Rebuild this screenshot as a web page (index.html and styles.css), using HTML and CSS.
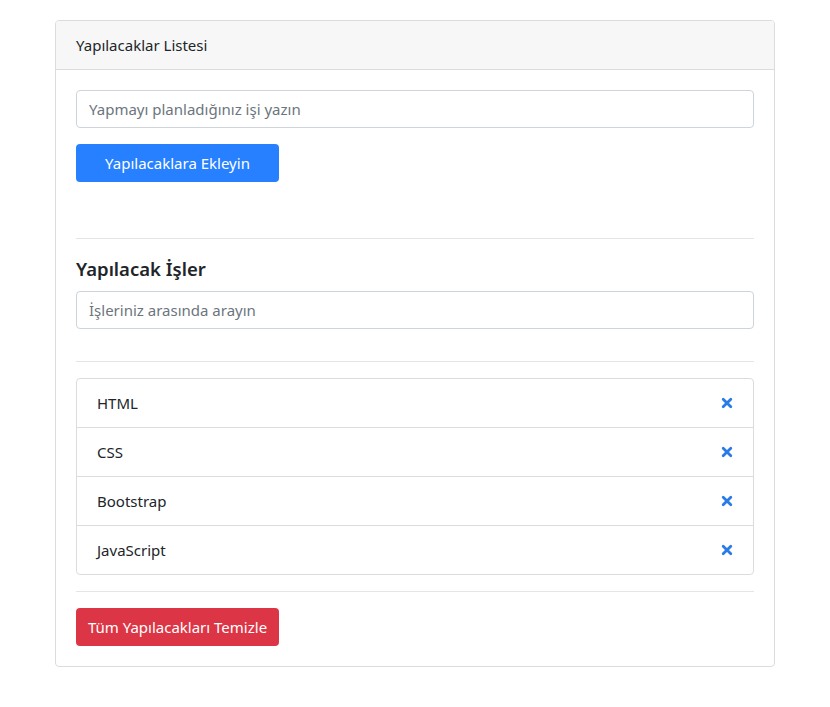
FILE: index.html
```html
<!DOCTYPE html>
<html lang="tr">
<head>
<meta charset="utf-8">
<title>Yapılacaklar Listesi</title>
<link rel="stylesheet" href="styles.css">
</head>
<body>
<div class="container">
  <div class="card">
    <div class="card-header">Yapılacaklar Listesi</div>
    <div class="card-body">
      <form class="add-form">
        <input class="form-control" type="text" placeholder="Yapmayı planladığınız işi yazın">
        <button type="button" class="btn btn-primary">Yapılacaklara Ekleyin</button>
      </form>
      <hr class="sep sep-first">
      <h5 class="title">Yapılacak İşler</h5>
      <input class="form-control" type="text" placeholder="İşleriniz arasında arayın">
      <hr class="sep sep-mid">
      <ul class="list">
        <li class="list-item"><span>HTML</span><a class="del" href="#"><svg width="12" height="12" viewBox="0 0 12 12"><path d="M2.2 2.2L9.8 9.8M9.8 2.2L2.2 9.8" stroke="currentColor" stroke-width="2.8" stroke-linecap="round"/></svg></a></li>
        <li class="list-item"><span>CSS</span><a class="del" href="#"><svg width="12" height="12" viewBox="0 0 12 12"><path d="M2.2 2.2L9.8 9.8M9.8 2.2L2.2 9.8" stroke="currentColor" stroke-width="2.8" stroke-linecap="round"/></svg></a></li>
        <li class="list-item"><span>Bootstrap</span><a class="del" href="#"><svg width="12" height="12" viewBox="0 0 12 12"><path d="M2.2 2.2L9.8 9.8M9.8 2.2L2.2 9.8" stroke="currentColor" stroke-width="2.8" stroke-linecap="round"/></svg></a></li>
        <li class="list-item"><span>JavaScript</span><a class="del" href="#"><svg width="12" height="12" viewBox="0 0 12 12"><path d="M2.2 2.2L9.8 9.8M9.8 2.2L2.2 9.8" stroke="currentColor" stroke-width="2.8" stroke-linecap="round"/></svg></a></li>
      </ul>
      <hr class="sep sep-last">
      <button type="button" class="btn btn-danger">Tüm Yapılacakları Temizle</button>
    </div>
  </div>
</div>
</body>
</html>
```
FILE: styles.css
```css
* { box-sizing: border-box; }
html, body { margin: 0; padding: 0; }
body {
  background: #fff;
  color: #212529;
  font-family: "Noto Sans", "Open Sans", sans-serif;
  font-size: 15px;
  line-height: 24px;
}
.container {
  width: 720px;
  margin: 20px auto 0;
}
.card {
  border: 1px solid #dcdcdc;
  border-radius: 4px;
  overflow: hidden;
}
.card-header {
  background: #f7f7f7;
  border-bottom: 1px solid #dcdcdc;
  padding: 12px 20px;
  height: 49px;
}
.card-body {
  padding: 20px;
}
.add-form {
  display: flex;
  flex-direction: column;
  align-items: flex-start;
}
.form-control {
  display: block;
  width: 100%;
  height: 38px;
  padding: 6px 12px;
  border: 1px solid #ced4da;
  border-radius: 4px;
  font-family: inherit;
  font-size: 15px;
  color: #495057;
  outline: none;
}
.form-control::placeholder { color: #6c757d; }
.btn {
  display: block;
  width: 203px;
  height: 38px;
  border: none;
  border-radius: 4px;
  font-family: inherit;
  font-size: 15px;
  color: #fff;
  padding: 0;
}
.btn-primary { background: #2680ff; margin-top: 16px; }
.btn-danger { background: #dc3545; }
.sep {
  border: 0;
  border-top: 1px solid #e5e5e5;
  margin: 0;
}
.sep-first { margin-top: 56px; }
.title {
  font-size: 18.5px;
  font-weight: 600;
  line-height: 24px;
  margin: 18px 0 10px;
}
.sep-mid { margin-top: 32px; margin-bottom: 16px; }
.list {
  list-style: none;
  margin: 0;
  padding: 0;
  border: 1px solid #dcdcdc;
  border-radius: 4px;
}
.list-item {
  display: flex;
  justify-content: space-between;
  align-items: center;
  padding: 12px 20px;
  height: 49px;
  border-top: 1px solid #dcdcdc;
}
.list-item:first-child { border-top: none; height: 48px; }
.del { color: #2a7be6; display: flex; }
.sep-last { margin: 16px 0; }
```
